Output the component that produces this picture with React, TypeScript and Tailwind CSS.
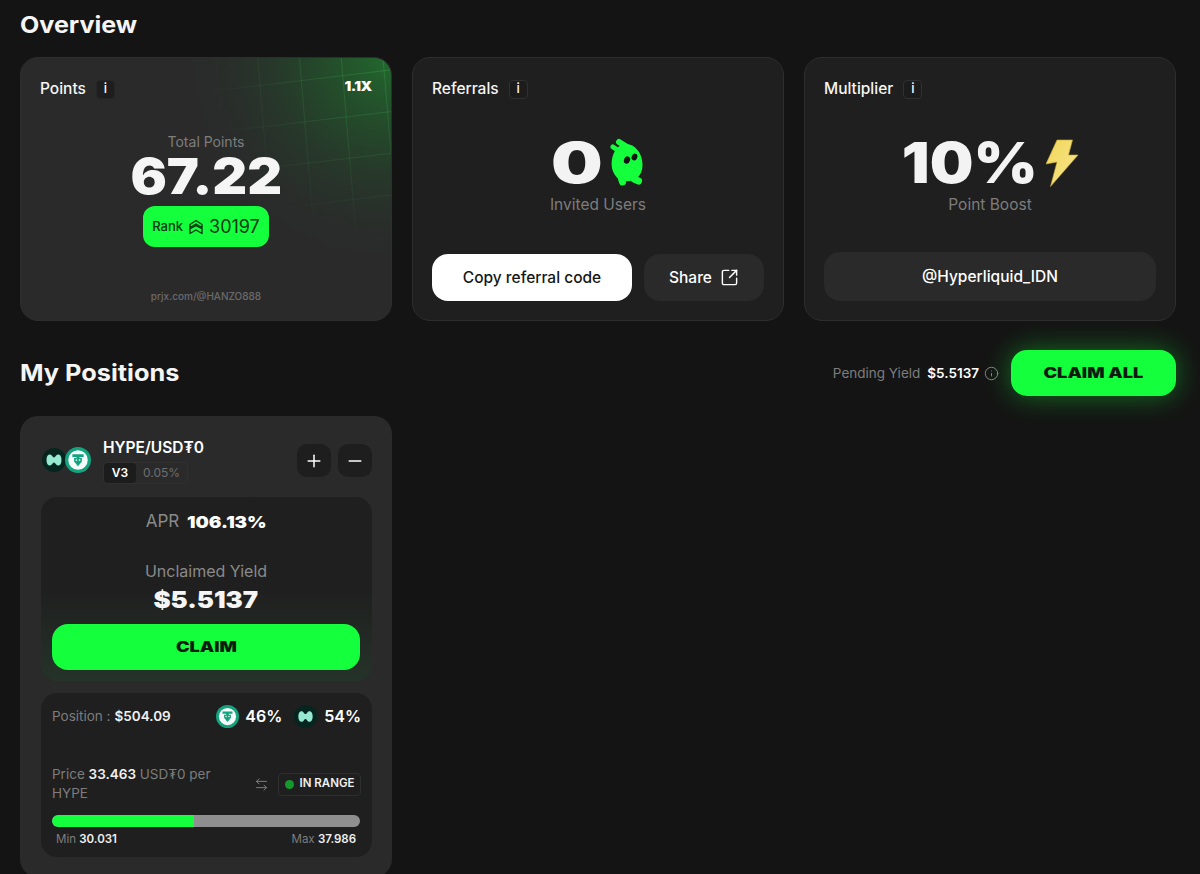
import { ArrowLeftRight, Info, Minus, Plus, SquareArrowOutUpRight } from 'lucide-react';

function InfoBadge({ dark }: { dark?: boolean }) {
  return (
    <span className={`flex h-[19px] w-[19px] items-center justify-center rounded-[4px] border text-[13px] font-medium text-white ${dark ? 'border-[#252525] bg-[#1e1e1e]' : 'border-[#303030] bg-[#1c1c1c]'}`}>
      i
    </span>
  );
}

function CardTitle({ title, dark }: { title: string; dark?: boolean }) {
  return (
    <div className="flex h-6 items-center gap-[10px]">
      <span className="text-[15.5px] font-medium text-[#f5f5f5]">{title}</span>
      <InfoBadge dark={dark} />
    </div>
  );
}

function HypeLogo({ size }: { size: number }) {
  return (
    <svg width={size} height={size} viewBox="0 0 24 24" className="shrink-0">
      <circle cx="12" cy="12" r="12" fill="#06251f" />
      <path d="M4.500 12c0-3.800 1.500-5.500 3.400-5.500 2.300 0 2.500 3 4.100 3s1.800-3 4.100-3c1.900 0 3.400 1.700 3.400 5.500s-1.500 5.500-3.400 5.500c-2.300 0-2.500-3-4.100-3s-1.800 3-4.100 3C6 17.500 4.500 15.800 4.500 12z" fill="#97e8d0" />
    </svg>
  );
}

function TetherLogo({ size }: { size: number }) {
  return (
    <svg width={size} height={size} viewBox="0 0 24 24" className="shrink-0">
      <circle cx="12" cy="12" r="12" fill="#14a37f" />
      <circle cx="12" cy="12" r="9" fill="#f4fbf9" />
      <path d="M6.800 6.800h10.400v2.400h-3.800v1h2.200v3.200L12 17.800l-3.600-4.400v-3.200h2.200v-1H6.800z" fill="#14a37f" />
      <circle cx="10.500" cy="12" r="0.800" fill="#f4fbf9" />
      <circle cx="13.500" cy="12" r="0.800" fill="#f4fbf9" />
    </svg>
  );
}

function Mascot() {
  return (
    <svg width="36" height="50" viewBox="12 8 36 50" className="shrink-0">
      <g stroke="#14ff3c" strokeLinecap="round" fill="none">
        <path d="M16 17l6 4" strokeWidth="5" />
        <path d="M22 12l8 5" strokeWidth="6" />
        <path d="M24 47l1.500 5" strokeWidth="7" />
        <path d="M37 49l4.500 2" strokeWidth="7" />
      </g>
      <path d="M29 14c9 0 16 9 16.500 20 .4 9-4.500 16-12.500 17-10 1-16-4-18-13-2-12 4.500-24 14-24z" fill="#14ff3c" />
      <ellipse cx="30" cy="30" rx="3" ry="3.800" transform="rotate(20 30 30)" fill="#141414" />
      <ellipse cx="37.500" cy="27" rx="2.800" ry="3.500" transform="rotate(20 37.500 27)" fill="#141414" />
    </svg>
  );
}

function Bolt() {
  return (
    <svg width="32" height="48" viewBox="0 0 32 48" className="shrink-0">
      <defs>
        <linearGradient id="bolt" x1="0" y1="0" x2="1" y2="1">
          <stop offset="0" stopColor="#f2d75c" />
          <stop offset="1" stopColor="#f7e68c" />
        </linearGradient>
      </defs>
      <path d="M11 1h15.500l-4 15H32L4.500 47.500l6.500-24.500L0 25z" fill="url(#bolt)" stroke="#c9ad38" strokeWidth="0.600" />
    </svg>
  );
}

function RankIcon() {
  return (
    <svg width="16" height="16" viewBox="0 0 16 16" fill="none" stroke="#0b3a14" strokeWidth="1.400" strokeLinejoin="round">
      <path d="M2 5.500 8 1.500l6 4v3L8 5 2 8.500z" />
      <path d="M2 9.500 8 6.500l6 3v5L8 11l-6 3.500z" />
    </svg>
  );
}

function PointsGlow() {
  const xs = [196, 238, 280, 322, 364];
  const ys = [24, 66, 108, 150, 192];
  return (
    <svg className="absolute inset-0 h-full w-full" viewBox="0 0 372 264" preserveAspectRatio="none">
      <defs>
        <radialGradient id="glow" cx="372" cy="0" r="215" gradientUnits="userSpaceOnUse">
          <stop offset="0" stopColor="#21752f" stopOpacity="0.85" />
          <stop offset="0.4" stopColor="#1f5e2a" stopOpacity="0.5" />
          <stop offset="1" stopColor="#2a2a2a" stopOpacity="0" />
        </radialGradient>
        <radialGradient id="gridFade" cx="372" cy="0" r="190" gradientUnits="userSpaceOnUse">
          <stop offset="0" stopColor="#3fae50" stopOpacity="0.35" />
          <stop offset="1" stopColor="#3fae50" stopOpacity="0" />
        </radialGradient>
      </defs>
      <rect width="372" height="264" fill="url(#glow)" />
      <g stroke="url(#gridFade)" strokeWidth="1">
        {xs.map((x) => (
          <line key={x} x1={x} y1="0" x2={x + 22} y2="264" />
        ))}
        {ys.map((y) => (
          <line key={y} x1="120" y1={y + 18} x2="372" y2={y - 12} />
        ))}
      </g>
    </svg>
  );
}

export default function App() {
  return (
    <div className="h-[874px] overflow-hidden bg-[#141414] pl-5 pr-6 font-['Inter',sans-serif] text-white">
      <h1 className="flex h-[50px] items-center text-[23px] font-bold text-[#f5f5f5]">
        <span className="inline-block origin-left scale-x-[1.09]">Overview</span>
      </h1>

      <div className="mt-[7px] grid h-[264px] grid-cols-3 gap-5">
        <div className="relative flex flex-col overflow-hidden rounded-[18px] border border-[#2e2e2e] bg-[#2a2a2a] px-[19px] pt-[19px]">
          <PointsGlow />
          <div className="relative flex items-center justify-between">
            <CardTitle title="Points" dark />
            <span className="mb-1 inline-block origin-right scale-x-[1.15] text-[13px] font-black tracking-[-0.5px]">1.1X</span>
          </div>
          <div className="relative mt-[31px] flex flex-col items-center">
            <span className="text-[14px] leading-5 text-[#7d7d7d]">Total Points</span>
            <span className="inline-block scale-x-[1.08] text-[50px] font-black leading-[48px] text-[#f5f5f5]">67.22</span>
            <div className="mt-[6px] flex h-[41px] w-[126px] items-center justify-center gap-[5px] rounded-xl bg-[#14ff3c] text-[#0b3a14]">
              <span className="text-[13px] font-medium">Rank</span>
              <RankIcon />
              <span className="text-[18px]">30197</span>
            </div>
            <span className="mt-[42px] text-[10px] font-medium text-[#6a6a6a]">prjx.com/@HANZO888</span>
          </div>
        </div>

        <div className="flex flex-col rounded-[18px] border border-[#2e2e2e] bg-[#1f1f1f] px-[19px] pt-[19px]">
          <CardTitle title="Referrals" />
          <div className="mt-[37px] flex h-[50px] items-center justify-center gap-3 pl-[6px]">
            <span className="inline-block scale-x-[1.3] text-[56px] font-black leading-none text-[#f3f3f3]">0</span>
            <Mascot />
          </div>
          <span className="mt-[5px] self-center text-[15.5px] text-[#7d7d7d]">Invited Users</span>
          <div className="mt-[38px] flex gap-3">
            <button className="h-[47px] w-[200px] rounded-2xl bg-white text-[15.5px] font-medium text-[#161616]">Copy referral code</button>
            <button className="flex h-[47px] w-[120px] items-center justify-center gap-2 rounded-2xl bg-[#2a2a2a] text-[15.5px] font-medium text-white">
              Share
              <SquareArrowOutUpRight size={19} strokeWidth={1.800} />
            </button>
          </div>
        </div>

        <div className="flex flex-col rounded-[18px] border border-[#2e2e2e] bg-[#1f1f1f] px-[19px] pt-[19px]">
          <CardTitle title="Multiplier" />
          <div className="mt-[37px] flex h-[50px] items-center justify-center gap-[15px] pl-[6px]">
            <span className="inline-block scale-x-[1.1] text-[56px] font-black leading-none text-[#f3f3f3]">10%</span>
            <Bolt />
          </div>
          <span className="mt-[5px] self-center text-[15.5px] text-[#7d7d7d]">Point Boost</span>
          <div className="mt-9 flex h-[49px] items-center justify-center rounded-2xl bg-[#2a2a2a] text-[15.5px] font-medium text-white">
            @Hyperliquid_IDN
          </div>
        </div>
      </div>

      <div className="mt-[29px] flex h-[46px] items-center justify-between">
        <h2 className="text-[23px] font-bold text-[#f5f5f5]">
          <span className="inline-block origin-left scale-x-[1.1]">My Positions</span>
        </h2>
        <div className="flex items-center">
          <span className="text-[13.5px] text-[#7d7d7d]">Pending Yield</span>
          <span className="ml-[7px] text-[13.5px] font-semibold text-white">$5.5137</span>
          <Info size={15} strokeWidth={1.500} className="ml-[5px] text-[#8a8a8a]" />
          <button className="ml-[12px] h-[46px] w-[165px] rounded-2xl bg-[#14ff3c] pb-[2px] text-[14px] font-black text-[#0e1a10] shadow-[0_0_28px_rgba(20,255,60,0.4)]">
            <span className="inline-block scale-x-[1.3]">CLAIM ALL</span>
          </button>
        </div>
      </div>

      <div className="mt-5 w-[372px] rounded-[18px] bg-[#2a2a2a] pb-5 pl-[21px] pr-[20px] pt-[20px]">
        <div className="flex h-[61px] items-start">
          <div className="mt-[11px] flex w-[62px] items-center pl-[1px]">
            <HypeLogo size={24} />
            <div className="-ml-[1px]">
              <TetherLogo size={26} />
            </div>
          </div>
          <div className="flex flex-col pt-[1px]">
            <span className="text-[15.5px] font-semibold leading-[22px] text-white">HYPE/USD₮0</span>
            <div className="mt-[3px] flex h-[22px] w-[85px] items-center rounded-[4px] border border-[#303030] text-[12px]">
              <span className="flex h-full w-[32px] items-center justify-center rounded-[4px] bg-[#1c1c1c] font-semibold text-white">V3</span>
              <span className="ml-[7px] text-[#6e6e6e]">0.05%</span>
            </div>
          </div>
          <div className="ml-auto mt-2 flex gap-[7px]">
            <button className="flex h-[33px] w-[34px] items-center justify-center rounded-[10px] bg-[#1e1e1e] text-white">
              <Plus size={20} strokeWidth={1.800} />
            </button>
            <button className="flex h-[33px] w-[34px] items-center justify-center rounded-[10px] bg-[#1e1e1e] text-white">
              <Minus size={20} strokeWidth={1.800} />
            </button>
          </div>
        </div>

        <div className="flex h-[184px] flex-col items-center rounded-2xl bg-gradient-to-b from-[#1f1f1f] from-50% to-[#25332a] pl-[11px] pr-[12px] pt-[13px]">
          <div className="flex h-6 items-center gap-[8px]">
            <span className="text-[17px] text-[#8a8a8a]">APR</span>
            <span className="inline-block w-[79px] text-[16px] font-black text-white">
              <span className="inline-block origin-left scale-x-[1.17]">106.13%</span>
            </span>
          </div>
          <span className="mt-[25px] text-[16px] leading-[24px] text-[#8a8a8a]">Unclaimed Yield</span>
          <span className="mt-[1px] inline-block scale-x-[1.12] text-[23px] font-black leading-[32px] text-[#f5f5f5]">$5.5137</span>
          <button className="mt-2 h-[46px] w-full rounded-2xl bg-[#14ff3c] pb-[2px] text-[14px] font-black text-[#0e1a10]">
            <span className="inline-block scale-x-[1.3]">CLAIM</span>
          </button>
        </div>

        <div className="mt-3 flex h-[164px] flex-col rounded-2xl bg-[#1f1f1f] pl-[11px] pr-[12px] pt-[11px]">
          <div className="flex h-6 items-center">
            <span className="text-[13.5px] text-[#7d7d7d]">Position :</span>
            <span className="ml-1 text-[13.5px] font-semibold text-[#f0f0f0]">$504.09</span>
            <div className="-mr-[1px] ml-auto flex items-center">
              <TetherLogo size={23} />
              <span className="ml-[6px] text-[16px] font-semibold text-white">46%</span>
              <span className="ml-[12px]">
                <HypeLogo size={23} />
              </span>
              <span className="ml-[7px] text-[16px] font-semibold text-white">54%</span>
            </div>
          </div>
          <div className="mt-[37px] flex h-[38px] items-center">
            <p className="w-[180px] text-[13.5px] leading-[19px] text-[#7d7d7d]">
              Price <span className="font-semibold text-[#f0f0f0]">33.463</span> USD₮0 per HYPE
            </p>
            <ArrowLeftRight size={15} strokeWidth={1.400} className="ml-auto text-[#8a8a8a]" />
            <div className="-mr-[1px] ml-[9px] flex h-[23px] w-[83px] items-center justify-center gap-[6px] rounded-[4px] border border-[#2e2e2e] text-[11.5px] font-semibold text-[#f0f0f0]">
              <span className="h-[9px] w-[9px] rounded-full bg-[#149a2c]" />
              IN RANGE
            </div>
          </div>
          <div className="mt-3 h-3 overflow-hidden rounded-full bg-[#8f8f8f]">
            <div className="h-full w-[46%] rounded-l-full bg-[#14ff3c]" />
          </div>
          <div className="mt-1 flex justify-between px-1 text-[11.5px] leading-[16px] text-[#7d7d7d]">
            <span>
              Min <span className="font-semibold text-[#f0f0f0]">30.031</span>
            </span>
            <span>
              Max <span className="font-semibold text-[#f0f0f0]">37.986</span>
            </span>
          </div>
        </div>
      </div>
    </div>
  );
}
